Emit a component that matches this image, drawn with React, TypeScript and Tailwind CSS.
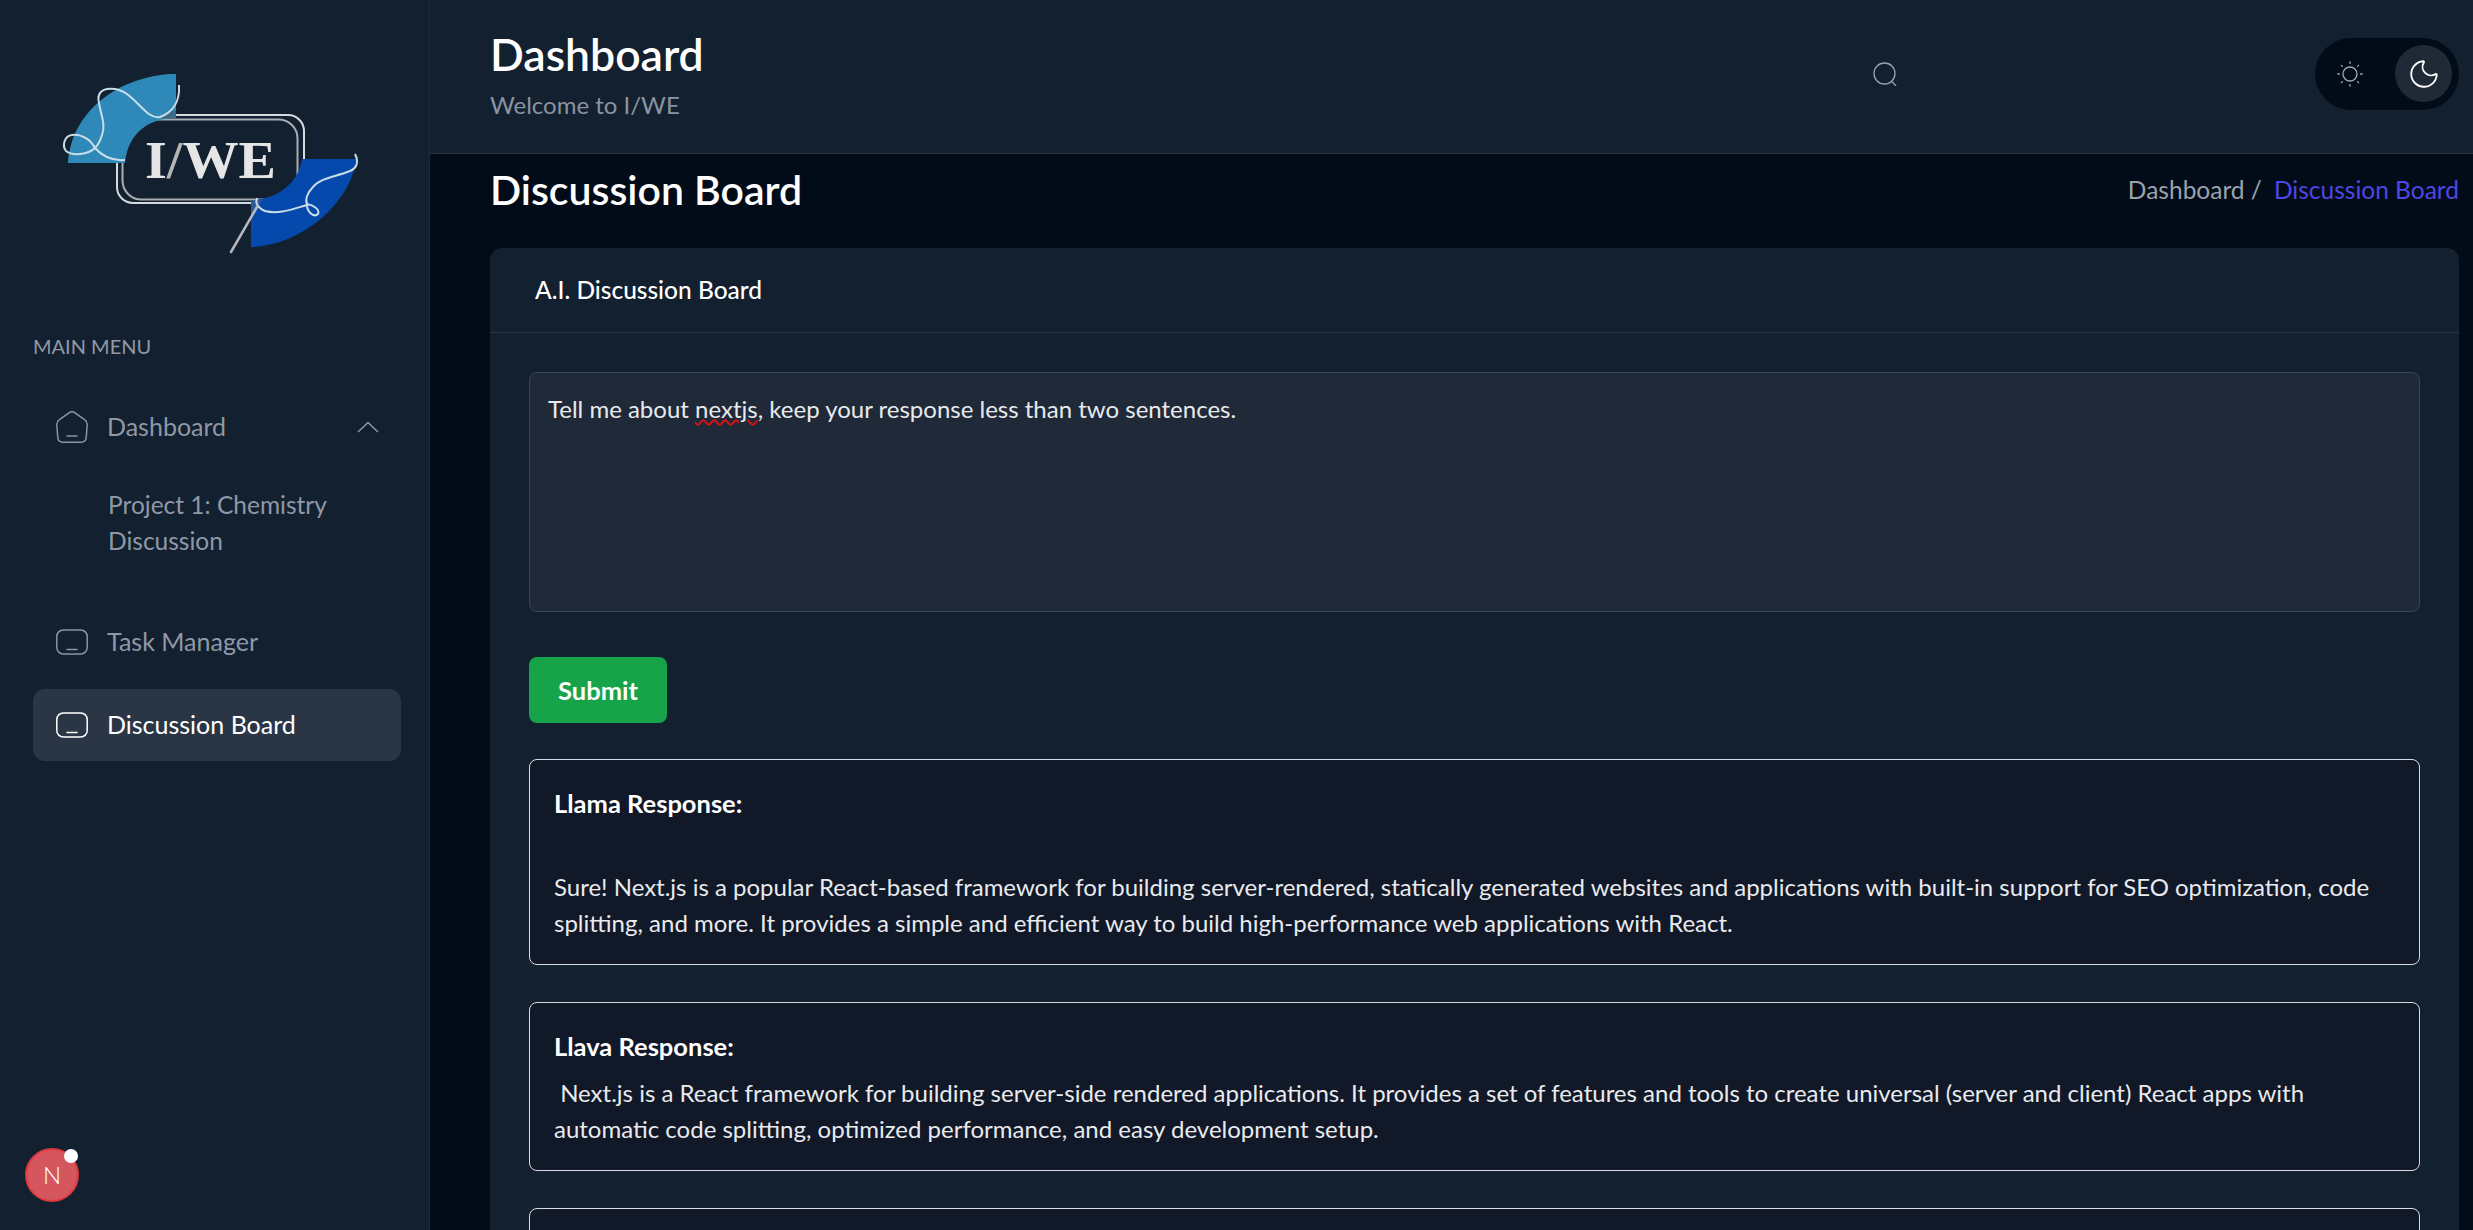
import React from 'react';
import { Moon } from 'lucide-react';

const Logo = () => (
  <svg viewBox="0 0 330 220" className="w-[330px] h-[220px]" fill="none">
    <rect x="67" y="65" width="187" height="88" rx="16" stroke="#d5dade" strokeWidth="2" />
    <rect x="72.5" y="69.5" width="175" height="80" rx="19" stroke="#a9aeb3" strokeWidth="2" />
    <path d="M18 113 C22 55 78 24 126 24 L126 68 C100 68 78 82 75 113 Z" fill="#2e89b8" />
    <path d="M112 65 L126 60 L126 68 L112 69 Z" fill="#3d6b85" />
    <path d="M252 109 L306 109 C302 150 255 195 201 197 L201 150 C225 150 248 135 252 109 Z" fill="#0449ab" />
    <path d="M201 150 L212 150 L201 170 Z" fill="#2f5a96" />
    <text x="95" y="128" fontFamily="'Liberation Serif', serif" fontWeight="700" fontSize="53" fill="#e6e6e6" textLength="131" lengthAdjust="spacingAndGlyphs">
      I<tspan fill="#b5b5b5">/</tspan>WE
    </text>
    <path d="M129 35 C130 50 124 62 110 67 C95 70 85 42 65 39 C50 37 47 45 49 53 C51 65 56 75 52 85 C50 92 47 96 45 98 C40 88 30 84 22 85 C14 86 12 96 16 101 C22 106 38 105 45 98 C52 106 62 111 75 110" stroke="#c9dde8" strokeWidth="2" />
    <path d="M305 104 C309 112 307 118 300 121 C285 127 270 128 263 137 C257 143 255 150 257 154 C264 155 270 160 268 164 C264 168 257 162 257 155 C245 158 230 165 215 161 C208 158 205 153 207 148" stroke="#c9dde8" strokeWidth="2" />
    <path d="M207 157 L181 202" stroke="#b4b8bc" strokeWidth="2.5" strokeLinecap="round" />
  </svg>
);

const NavIcon = ({ home, active }: { home?: boolean; active?: boolean }) => (
  <svg viewBox="0 0 32 32" className={active ? 'w-[32px] h-[32px] text-white' : 'w-[32px] h-[32px] text-[#8c95a3]'} fill="none" stroke="currentColor" strokeWidth="1.5">
    {home ? (
      <path d="M13 1.8 C15 .4 17 .4 19 1.8 L28.6 8.6 C30.6 10 31.4 11.6 31.2 14 L30.2 26.5 C30 29.6 28 31.2 25 31.2 L7 31.2 C4 31.2 2 29.6 1.8 26.5 L.8 14 C.6 11.6 1.4 10 3.4 8.6 Z" />
    ) : (
      <rect x=".8" y="4" width="30.4" height="24" rx="6.5" />
    )}
    <path d={home ? 'M11 25 H21' : 'M11 23.5 H21'} strokeLinecap="round" />
  </svg>
);

const Answer = ({ title, gap, children }: { title: string; gap: string; children: React.ReactNode }) => (
  <div className="rounded-lg border border-[#d8dce2] bg-[#111827] px-[24px] pt-[25px] pb-[23px] text-[24px] text-[#e8eaee] leading-[36px]">
    <p className={`text-[25.5px] font-bold text-white ${gap}`}>{title}</p>
    <p>{children}</p>
  </div>
);

export default function App() {
  return (
    <div className="flex h-[1230px] overflow-hidden bg-[#010c18] text-[24px] text-white" style={{ fontFamily: 'Lato, sans-serif' }}>
      <aside className="w-[430px] shrink-0 bg-[#13202f] border-r border-[#1c2a3a] flex flex-col">
        <div className="pl-[50px] pt-[50px]"><Logo /></div>
        <p className="ml-[33px] mt-[61px] text-[20px] text-[#9099a6]">MAIN MENU</p>
        <div className="ml-[33px] mr-[28px] mt-[48px] flex flex-col text-[25px] text-[#8f98a6]">
          <div className="flex items-center pl-[23px] pr-[22px] h-[36px]">
            <NavIcon home />
            <span className="ml-[19px] flex-1">Dashboard</span>
            <svg viewBox="0 0 22 12" className="w-[22px] h-[12px]" fill="none" stroke="currentColor" strokeWidth="1.5">
              <path d="M1 11 L11 1.5 L21 11" />
            </svg>
          </div>
          <p className="ml-[75px] mt-[42px] text-[24.5px] leading-[36px]">Project 1: Chemistry Discussion</p>
          <div className="flex items-center px-[23px] h-[36px] mt-[65px]">
            <NavIcon />
            <span className="ml-[19px]">Task Manager</span>
          </div>
          <div className="flex items-center px-[23px] h-[72px] mt-[29px] rounded-xl bg-[#2a3646] text-white">
            <NavIcon active />
            <span className="ml-[19px]">Discussion Board</span>
          </div>
        </div>
        <div className="mt-auto mb-[28px] ml-[25px] relative w-[54px] h-[54px] rounded-full border-2 border-[#e0383f] bg-[#d5565e] flex items-center justify-center text-[24px] font-light">
          N
          <span className="absolute -top-[1px] -right-[1px] w-[14px] h-[14px] rounded-full bg-white" />
        </div>
      </aside>
      <div className="flex-1 min-w-0 flex flex-col">
        <header className="h-[154px] shrink-0 bg-[#13202f] border-b border-[#2a3644] flex items-center pl-[60px] pr-[14px]">
          <div className="flex-1 mb-[2px]">
            <h1 className="text-[44.5px] font-semibold leading-[50px]">Dashboard</h1>
            <p className="text-[24px] text-[#8a93a1] mt-[8px]">Welcome to I/WE</p>
          </div>
          <svg viewBox="0 0 24 24" className="w-[24px] h-[24px] text-[#9aa1ab] mr-[418px] mb-[6px]" fill="none" stroke="currentColor" strokeWidth="1.3">
            <circle cx="11.5" cy="11.5" r="10.5" />
            <path d="M19 19.5 L23 24" />
          </svg>
          <div className="flex items-center justify-between w-[144px] h-[72px] mb-[6px] rounded-full bg-[#010c18] pl-[22px] pr-[7px]">
            <svg viewBox="0 0 26 26" className="w-[26px] h-[26px] text-[#a3a8b0]" fill="none" stroke="currentColor" strokeWidth="1.3" strokeLinecap="round">
              <circle cx="13" cy="13" r="7" />
              <path d="M13 .8 V2.4 M13 23.6 V25.2 M.8 13 H2.4 M23.6 13 H25.2 M4.4 4.4 L5.4 5.4 M20.6 20.6 L21.6 21.6 M21.6 4.4 L20.6 5.4 M5.4 20.6 L4.4 21.6" />
            </svg>
            <span className="w-[57px] h-[57px] rounded-full bg-[#1f2a36] flex items-center justify-center">
              <Moon className="w-[34px] h-[34px] text-white" strokeWidth={1.3} />
            </span>
          </div>
        </header>
        <main className="pl-[60px] pr-[14px]">
          <div className="flex items-center justify-between h-[72px] mb-[22px]">
            <h2 className="text-[41px] font-semibold">Discussion Board</h2>
            <p className="text-[24.5px] text-[#9ba2ad]">Dashboard /<span className="ml-[12px] text-[#4f46e5]">Discussion Board</span></p>
          </div>
          <section className="rounded-xl bg-[#13202f]">
            <div className="h-[85px] flex items-center px-[45px] border-b border-[#2a3644] text-[24.5px] font-medium">A.I. Discussion Board</div>
            <div className="pl-[39px] pr-[39px] pt-[39px] flex flex-col">
              <div className="h-[240px] rounded-lg border border-[#3a4656] bg-[#1f2937] px-[18px] pt-[20px] text-[#e8eaee] leading-[32px]">
                Tell me about <span className="underline decoration-wavy decoration-[#e01010] decoration-2">nextjs</span>, keep your response less than two sentences.
              </div>
              <button className="mt-[45px] self-start w-[138px] h-[66px] rounded-lg bg-[#16a34a] text-[25.5px] font-bold">Submit</button>
              <div className="mt-[36px] flex flex-col gap-[37px]">
                <Answer title="Llama Response:" gap="mb-[48px]">
                  Sure! Next.js is a popular React-based framework for building server-rendered, statically generated websites and applications with built-in support for SEO optimization, code splitting, and more. It provides a simple and efficient way to build high-performance web applications with React.
                </Answer>
                <Answer title="Llava Response:" gap="mb-[11px]">
                  &nbsp;Next.js is a React framework for building server-side rendered applications. It provides a set of features and tools to create universal (server and client) React apps with automatic code splitting, optimized performance, and easy development setup.
                </Answer>
                <div className="h-[100px] rounded-lg border border-[#d8dce2] bg-[#111827]" />
              </div>
            </div>
          </section>
        </main>
      </div>
    </div>
  );
}
